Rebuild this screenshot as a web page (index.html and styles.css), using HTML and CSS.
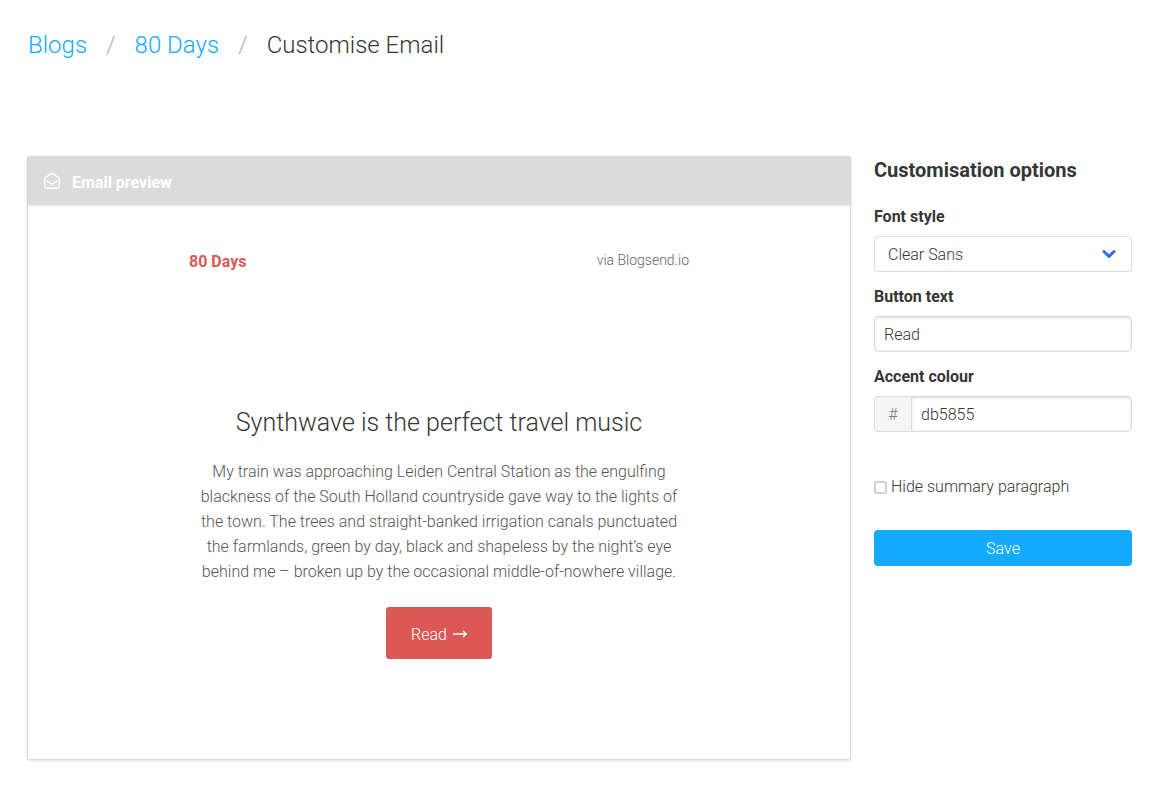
FILE: index.html
```
<!DOCTYPE html>
<html lang="en">
<head>
<meta charset="utf-8">
<meta name="viewport" content="width=device-width, initial-scale=1">
<title>Customise Email</title>
<link rel="stylesheet" href="styles.css">
</head>
<body>
<nav class="breadcrumb" aria-label="Breadcrumb">
  <a href="#blogs">Blogs</a>
  <span class="divider">/</span>
  <a href="#80-days">80 Days</a>
  <span class="divider">/</span>
  <span class="current">Customise Email</span>
</nav>
<main class="layout">
  <section class="preview">
    <header class="preview-bar">
      <svg class="mail-icon" viewBox="0 0 18 18" aria-hidden="true">
        <path d="M1.7 6.2 8 1.6Q9 .9 10 1.6L16.3 6.2V14.7Q16.3 16.2 14.8 16.2H3.200Q1.700 16.200 1.700 14.700Z"/>
        <path d="M4.200 9 7.800 11.700Q9 12.500 10.200 11.700L13.800 9"/>
      </svg>
      <span>Email preview</span>
    </header>
    <div class="email">
      <div class="email-head">
        <strong class="blog-name">80 Days</strong>
        <span class="via">via Blogsend.io</span>
      </div>
      <article class="post">
        <h1 class="post-title">Synthwave is the perfect travel music</h1>
        <p class="post-summary">My train was approaching Leiden Central Station as the engulfing blackness of the South Holland countryside gave way to the lights of the town. The trees and straight-banked irrigation canals punctuated the farmlands, green by day, black and shapeless by the night’s eye behind me – broken up by the occasional middle-of-nowhere village.</p>
        <a class="read-button" href="#read">Read
          <svg class="arrow" viewBox="0 0 14 8" aria-hidden="true"><path d="M0 4H13M10 1 13.200 4 10 7"/></svg>
        </a>
      </article>
    </div>
  </section>
  <form class="options">
    <h2 class="options-title">Customisation options</h2>
    <label class="label" for="font">Font style</label>
    <div class="select-wrap">
      <select class="control select" id="font"><option>Clear Sans</option></select>
      <svg class="chevron" viewBox="0 0 14 10" aria-hidden="true"><path d="M2 2.500 7 7.300 12 2.500"/></svg>
    </div>
    <label class="label" for="button-text">Button text</label>
    <input class="control" id="button-text" type="text" value="Read">
    <label class="label" for="accent">Accent colour</label>
    <div class="input-group">
      <span class="prefix">#</span>
      <input class="control grouped" id="accent" type="text" value="db5855">
    </div>
    <label class="check"><input class="checkbox" type="checkbox"><span>Hide summary paragraph</span></label>
    <button class="save" type="button">Save</button>
  </form>
</main>
</body>
</html>
```
FILE: styles.css
```
* { box-sizing: border-box; }
body {
  margin: 0;
  padding: 27px 29px 28px 27px;
  background: #fff;
  color: #363636;
  font: 300 16px/25px Roboto, "Open Sans", sans-serif;
}
a { color: #14aaff; text-decoration: none; }
.breadcrumb {
  display: flex;
  flex-wrap: wrap;
  gap: 19px;
  margin-bottom: 93px;
  padding-left: 1px;
  font-size: 24px;
  line-height: 36px;
}
.divider { color: #b5b5b5; }
.layout {
  display: grid;
  grid-template-columns: minmax(0, 1fr) 258px;
  gap: 23px;
  align-items: start;
}
.preview {
  border: 1px solid #dbdbdb;
  border-radius: 2px;
  box-shadow: 0 1px 3px rgba(0, 0, 0, 0.12);
}
.preview-bar {
  display: flex;
  align-items: center;
  gap: 11px;
  height: 48px;
  padding: 2px 15px 0;
  background: #dbdbdb;
  box-shadow: 0 1px 2px rgba(0, 0, 0, 0.1);
  color: #fff;
  font-weight: 700;
}
.mail-icon {
  width: 18px;
  height: 18px;
  margin-bottom: 3px;
  fill: none;
  stroke: #fff;
  stroke-width: 1.4;
  stroke-linecap: round;
  stroke-linejoin: round;
}
.email {
  max-width: 500px;
  margin: 0 auto;
  padding: 44px 0 100px;
}
.email-head {
  display: flex;
  justify-content: space-between;
  margin-bottom: 130px;
}
.blog-name { color: #db5855; font-weight: 700; }
.via { color: #666; font-size: 14px; line-height: 23px; }
.post { text-align: center; }
.post-title {
  margin: 0 0 17px;
  font-size: 25px;
  font-weight: 300;
  line-height: 38px;
}
.post-summary { margin: 0 0 23px; color: #555; }
.read-button {
  display: inline-flex;
  align-items: center;
  gap: 6px;
  height: 52px;
  padding: 2px 25px 0;
  border-radius: 3px;
  background: #db5855;
  color: #fff;
}
.arrow {
  width: 14px;
  height: 8px;
  fill: none;
  stroke: #fff;
  stroke-width: 1.3;
}
.options { display: flex; flex-direction: column; }
.options-title {
  margin: 0 0 21px;
  font-size: 20px;
  font-weight: 700;
  line-height: 28px;
}
.label { margin-bottom: 7px; font-weight: 700; line-height: 24px; }
.control {
  width: 100%;
  height: 36px;
  margin: 0 0 13px;
  padding: 1px 9px 0;
  border: 1px solid #dbdbdb;
  border-radius: 4px;
  background: #fff;
  box-shadow: inset 0 1px 3px rgba(10, 10, 10, 0.14);
  color: #363636;
  font: inherit;
}
.select-wrap { position: relative; }
.select { appearance: none; padding: 1px 32px 0 13px; box-shadow: none; }
.chevron {
  position: absolute;
  top: 13px;
  right: 16px;
  width: 14px;
  height: 10px;
  fill: none;
  stroke: #3273dc;
  stroke-width: 3;
  stroke-linecap: round;
  stroke-linejoin: round;
  pointer-events: none;
}
.input-group { display: flex; margin-bottom: 42px; }
.prefix {
  flex: none;
  width: 38px;
  height: 36px;
  border: 1px solid #dbdbdb;
  border-radius: 4px 0 0 4px;
  background: #f5f5f5;
  color: #7a7a7a;
  line-height: 36px;
  text-align: center;
}
.grouped { min-width: 0; margin: 0 0 0 -1px; border-radius: 0 4px 4px 0; }
.check { display: flex; align-items: center; gap: 4px; margin-bottom: 31px; }
.checkbox {
  appearance: none;
  width: 13px;
  height: 13px;
  margin: 2px 0 0;
  border: 2px solid #d0d0d0;
  border-radius: 3px;
  background: #fff;
}
.checkbox:checked { background: #14aaff; }
.save {
  height: 36px;
  padding: 1px 0 0;
  border: 0;
  border-radius: 4px;
  background: #14aaff;
  color: #fff;
  font: inherit;
}
```
